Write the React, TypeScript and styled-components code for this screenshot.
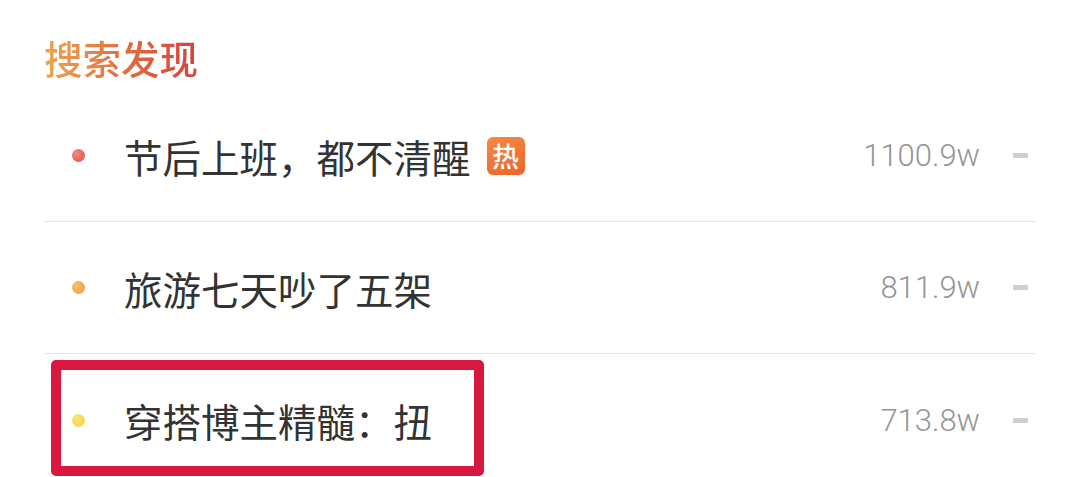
import { createGlobalStyle } from 'styled-components';
import styled from 'styled-components';

const GlobalStyle = createGlobalStyle`
  html, body {
    margin: 0;
    padding: 0;
    background: #ffffff;
  }
  body {
    font-family: "Noto Sans CJK SC", "Noto Sans", sans-serif;
    overflow: hidden;
  }
`;

const Page = styled.div`
  width: 1080px;
  height: 477px;
  padding: 0 44px;
  box-sizing: border-box;
  background: #fff;
`;

const Header = styled.div`
  height: 90px;
  padding-top: 30px;
  box-sizing: border-box;
`;

const Title = styled.h2`
  margin: 0;
  display: inline-block;
  font-size: 38.5px;
  line-height: 54px;
  font-weight: 500;
  background: linear-gradient(to right, #eda651, #e2703f 50%, #d6403c);
  -webkit-background-clip: text;
  background-clip: text;
  color: transparent;
`;

const List = styled.div`
  display: flex;
  flex-direction: column;
`;

const Row = styled.div`
  position: relative;
  height: 132px;
  display: flex;
  align-items: center;
  padding-left: 28px;
  padding-right: 8px;
  border-bottom: 1px solid #e6e6e6;
  box-sizing: border-box;

  &:last-child {
    border-bottom: none;
  }
`;

const Dot = styled.span<{ $color: string; $shade: string }>`
  width: 13px;
  height: 13px;
  border-radius: 50%;
  flex-shrink: 0;
  background: radial-gradient(circle at 35% 35%, ${p => p.$color}, ${p => p.$shade});
`;

const Label = styled.span`
  margin-left: 39px;
  font-size: 38.5px;
  color: #333333;
  white-space: nowrap;
`;

const HotBadge = styled.span`
  margin-left: 16px;
  width: 38px;
  height: 38px;
  border-radius: 6px;
  background: linear-gradient(160deg, #f58845, #ee6428);
  color: #fff;
  font-size: 27px;
  font-weight: 500;
  display: flex;
  align-items: center;
  justify-content: center;
`;

const Count = styled.span`
  margin-left: auto;
  font-family: Roboto, "Liberation Sans", sans-serif;
  font-size: 31px;
  font-weight: 300;
  color: #959595;
`;

const Dash = styled.span`
  margin-left: 33px;
  width: 15px;
  height: 5px;
  border-radius: 1px;
  background: #cfcfcf;
`;

const Highlight = styled.div`
  position: absolute;
  left: 7px;
  top: 6px;
  width: 433px;
  height: 116px;
  box-sizing: border-box;
  border: 10px solid #d8183f;
  border-radius: 5px;
  pointer-events: none;
`;

const items = [
  { text: '节后上班，都不清醒', hot: true, count: '1100.9w', color: '#f58a7a', shade: '#e04a42' },
  { text: '旅游七天吵了五架', hot: false, count: '811.9w', color: '#fbbf6a', shade: '#f09a35' },
  { text: '穿搭博主精髓：扭', hot: false, count: '713.8w', color: '#fbe57a', shade: '#f3cf3a', marked: true },
];

export default function App() {
  return (
    <Page>
      <GlobalStyle />
      <Header>
        <Title>搜索发现</Title>
      </Header>
      <List>
        {items.map(item => (
          <Row key={item.text}>
            <Dot $color={item.color} $shade={item.shade} />
            <Label>{item.text}</Label>
            {item.hot && <HotBadge>热</HotBadge>}
            <Count>{item.count}</Count>
            <Dash />
            {item.marked && <Highlight />}
          </Row>
        ))}
      </List>
    </Page>
  );
}
